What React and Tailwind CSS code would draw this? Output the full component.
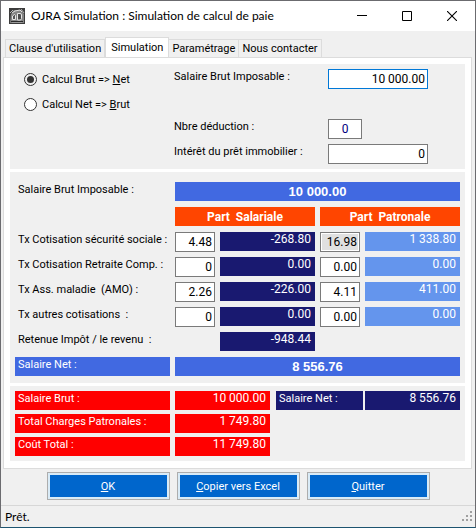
import { useState } from 'react'

const TABS = ["Clause d'utilisation", 'Simulation', 'Paramétrage', 'Nous contacter']

const COTISATIONS = [
  { label: 'Tx Cotisation sécurité sociale :', taux: '4.48', salariale: '-268.80', tauxPat: '16.98', patronale: '1 338.80', locked: true },
  { label: 'Tx Cotisation Retraite Comp. :',   taux: '0',    salariale: '0.00',    tauxPat: '0.00',  patronale: '0.00' },
  { label: 'Tx Ass. maladie  (AMO) :',         taux: '2.26', salariale: '-226.00', tauxPat: '4.11',  patronale: '411.00' },
  { label: 'Tx autres cotisations  :',         taux: '0',    salariale: '0.00',    tauxPat: '0.00',  patronale: '0.00' }
]

const TOTAUX = [
  { label: 'Salaire Brut :',             value: '10 000.00' },
  { label: 'Total Charges Patronales :', value: '1 749.80' },
  { label: 'Coût Total :',               value: '11 749.80' }
]

const FIELD = 'block h-5 border border-[#7a7a7a] bg-white text-xs text-black outline-none'
const AMOUNT = 'h-[19px] pr-1 text-right text-xs leading-[15px] text-white'

function AppIcon() {
  return (
    <svg viewBox="0 0 16 16" className="size-4" aria-hidden="true">
      <rect width="16" height="16" fill="#3c3c3c" />
      <path d="M1 15L2 6l3-4h7l3 4v9z" fill="#858585" />
      <path d="M1 5l3-3M12 1l3 4" stroke="#b5b5b5" />
      <path d="M3 5l3-2 5-1 2 2" fill="none" stroke="#dedede" />
      <path d="M3.500 8l2-1.500 1 1v4h-3z" fill="#555" stroke="#e6e6e6" />
      <path d="M8.500 12V5.500h2.500q1.500 0 1.500 1.500v3.500q0 1.500-1.500 1.500z" fill="#4a4a4a" stroke="#e6e6e6" />
      <path d="M2 13.500h12" stroke="#2a2a2a" />
      <path d="M3 14.500h10" stroke="#9a9a9a" />
    </svg>
  )
}

function TitleBar() {
  return (
    <header className="flex h-[30px] items-center bg-white pl-2 font-['Lato',sans-serif] text-black">
      <AppIcon />
      <h1 className="ml-1.5 flex-1 truncate text-xs">OJRA Simulation : Simulation de calcul de paie</h1>
      <button type="button" aria-label="Réduire" className="flex h-full w-[46px] items-center justify-center">
        <svg viewBox="0 0 10 10" className="size-2.5" stroke="#000" aria-hidden="true">
          <path d="M0 4.5h10" />
        </svg>
      </button>
      <button type="button" aria-label="Agrandir" className="flex h-full w-11 items-center justify-center">
        <svg viewBox="0 0 10 10" className="size-2.5" fill="none" stroke="#000" aria-hidden="true">
          <path d="M.5 .5h9v9h-9z" />
        </svg>
      </button>
      <button type="button" aria-label="Fermer" className="flex h-full w-[46px] items-center justify-center">
        <svg viewBox="0 0 10 10" className="size-2.5" stroke="#000" strokeWidth="1.1" aria-hidden="true">
          <path d="M0 0l10 10M10 0L0 10" />
        </svg>
      </button>
    </header>
  )
}

function Saisie() {
  const [mode, setMode] = useState('brut')

  return (
    <section className="flex bg-[#f0f0f0] py-[5px] pl-3.5">
      <fieldset className="w-[150px] space-y-[5px]">
        <label className="flex h-5 items-center gap-[5px]">
          <input
            type="radio"
            name="mode"
            checked={mode === 'brut'}
            onChange={() => setMode('brut')}
            className="size-[13px] appearance-none rounded-full border border-[#333] bg-white bg-clip-content p-0.5 checked:bg-[#333]"
          />
          <span>Calcul Brut =&gt; <u>N</u>et</span>
        </label>
        <label className="flex h-5 items-center gap-[5px]">
          <input
            type="radio"
            name="mode"
            checked={mode === 'net'}
            onChange={() => setMode('net')}
            className="size-[13px] appearance-none rounded-full border border-[#333] bg-white p-0.5 checked:bg-[#333] checked:bg-clip-content"
          />
          <span>Calcul Net =&gt; <u>B</u>rut</span>
        </label>
      </fieldset>
      <div className="grid flex-1 grid-cols-[154px_1fr] auto-rows-[20px] gap-y-[5px] pr-[37px]">
        <label htmlFor="brut">Salaire Brut Imposable :</label>
        <input id="brut" defaultValue="10 000.00" className="block h-5 w-full border border-[#0078d7] bg-white pr-0.5 text-right text-xs text-black outline-none" />
        <span className="col-span-2" />
        <label htmlFor="deduction">Nbre déduction :</label>
        <input id="deduction" defaultValue="0" className="block h-5 w-[34px] border border-[#7a7a7a] bg-white text-center text-xs text-[#000080] outline-none" />
        <label htmlFor="interet">Intérêt du prêt immobilier :</label>
        <input id="interet" defaultValue="0" className={`${FIELD} w-full pr-0.5 text-right`} />
      </div>
    </section>
  )
}

function Detail() {
  return (
    <section className="bg-[#f0f0f0] pt-[5px] pb-px">
      <table className="w-full table-fixed border-separate border-spacing-[5px]">
        <colgroup>
          <col className="w-[155px]" />
          <col className="w-10" />
          <col />
          <col className="w-10" />
          <col />
        </colgroup>
        <tbody>
          <tr className="h-5">
            <th scope="row" className="p-0 pl-[3px] text-left align-top font-normal">Salaire Brut Imposable :</th>
            <td colSpan={4} className="p-0 align-top">
              <div className="h-[19px] bg-[#4169e1] text-center font-['Liberation_Sans',sans-serif] text-[13px] leading-5 font-bold text-white">10 000.00</div>
            </td>
          </tr>
          <tr className="h-5">
            <td className="p-0" />
            <th scope="colgroup" colSpan={2} className="p-0 align-top">
              <div className="h-[19px] bg-[#ff4500] text-center text-xs leading-5 font-bold text-white">Part&nbsp; Salariale</div>
            </th>
            <th scope="colgroup" colSpan={2} className="p-0 align-top">
              <div className="h-[19px] bg-[#ff4500] text-center text-xs leading-5 font-bold text-white">Part&nbsp; Patronale</div>
            </th>
          </tr>
          {COTISATIONS.map(row => (
            <tr key={row.label} className="h-5">
              <th scope="row" className="p-0 pl-[3px] text-left align-top font-normal whitespace-pre">{row.label}</th>
              <td className="p-0 align-top">
                <input aria-label={`${row.label} part salariale`} defaultValue={row.taux} className={`${FIELD} w-full pr-0.5 text-right`} />
              </td>
              <td className="p-0 align-top">
                <div className={`${AMOUNT} bg-[#191970]`}>{row.salariale}</div>
              </td>
              <td className="p-0 align-top">
                <input
                  aria-label={`${row.label} part patronale`}
                  defaultValue={row.tauxPat}
                  readOnly={row.locked}
                  className={`${FIELD} w-full pr-0.5 text-right read-only:bg-[#e0e0e0] read-only:shadow-[inset_0_0_0_1px_#fff]`}
                />
              </td>
              <td className="p-0 align-top">
                <div className={`${AMOUNT} bg-[#6495ed]`}>{row.patronale}</div>
              </td>
            </tr>
          ))}
          <tr className="h-5">
            <th scope="row" className="p-0 pl-[3px] text-left align-top font-normal whitespace-pre">{'Retenue Impôt / le revenu  :'}</th>
            <td className="p-0" />
            <td className="p-0 align-top">
              <div className={`${AMOUNT} bg-[#191970]`}>-948.44</div>
            </td>
          </tr>
          <tr className="h-5">
            <th scope="row" className="p-0 text-left align-top font-normal">
              <div className="h-[19px] bg-[#4169e1] pl-[3px] text-white">Salaire Net :</div>
            </th>
            <td colSpan={4} className="p-0 align-top">
              <div className="h-[19px] bg-[#4169e1] text-center font-['Liberation_Sans',sans-serif] text-[13px] leading-5 font-bold text-white">8 556.76</div>
            </td>
          </tr>
        </tbody>
      </table>
    </section>
  )
}

function Totaux() {
  return (
    <section className="grid grid-cols-[255fr_184fr] items-start gap-x-1.5 bg-[#f0f0f0] p-[5px] text-white">
      <dl className="space-y-1">
        {TOTAUX.map(t => (
          <div key={t.label} className="grid h-[19px] grid-cols-[155fr_95fr] gap-x-[5px]">
            <dt className="bg-[#ff0000] pl-[3px]">{t.label}</dt>
            <dd className={`${AMOUNT} bg-[#ff0000]`}>{t.value}</dd>
          </div>
        ))}
      </dl>
      <dl className="grid h-[19px] grid-cols-[87fr_95fr] gap-x-0.5">
        <dt className="bg-[#191970] pl-[3px]">Salaire Net :</dt>
        <dd className={`${AMOUNT} bg-[#191970]`}>8 556.76</dd>
      </dl>
    </section>
  )
}

function ActionButton({ children }) {
  return (
    <button type="button" className="h-7 w-[123px] border border-[#adadad] bg-[#d9ebf7] p-0.5 text-white">
      <span className="flex h-full items-center justify-center bg-[#0066cc]">
        <span>{children}</span>
      </span>
    </button>
  )
}

function Grip() {
  return (
    <svg viewBox="0 0 11 11" className="size-[11px]" fill="#a0a0a0" aria-hidden="true">
      <path d="M8 0h2v2H8zM4 4h2v2H4zM8 4h2v2H8zM0 8h2v2H0zM4 8h2v2H4zM8 8h2v2H8z" />
    </svg>
  )
}

export default function App() {
  const [tab, setTab] = useState('Simulation')

  return (
    <div className="flex min-h-screen flex-col border border-[#6b6b6f] border-b-[#1d5470] bg-[#f0f0f0] font-['Roboto','Liberation_Sans',sans-serif] text-[11px] leading-[15px] text-black">
      <TitleBar />

      <main className="px-0.5 pr-[3px] pt-1.5">
        <nav role="tablist" className="flex items-end pl-0.5">
          {TABS.map(name => (
            <button
              key={name}
              type="button"
              role="tab"
              aria-selected={name === tab}
              onClick={() => setTab(name)}
              className={
                name === tab
                  ? 'h-5 border border-b-0 border-[#dcdcdc] bg-white px-[5px] pb-px'
                  : 'h-[18px] border border-b-0 border-l-0 border-[#dcdcdc] px-[3px] first:border-l'
              }
            >
              {name}
            </button>
          ))}
        </nav>
        <div role="tabpanel" className="space-y-[3px] border border-[#dcdcdc] bg-white p-1.5 pb-[7px]">
          <Saisie />
          <Detail />
          <Totaux />
        </div>
      </main>

      <div className="flex justify-center gap-[7px] pt-[3px] pb-[5px]">
        <ActionButton><u>O</u>K</ActionButton>
        <ActionButton><u>C</u>opier vers Excel</ActionButton>
        <ActionButton><u>Q</u>uitter</ActionButton>
      </div>

      <footer className="flex flex-1 items-center justify-between border-t border-[#d7d7d7] pr-0.5 pl-1 font-['Lato',sans-serif] text-xs">
        <span>Prêt.</span>
        <Grip />
      </footer>
    </div>
  )
}
